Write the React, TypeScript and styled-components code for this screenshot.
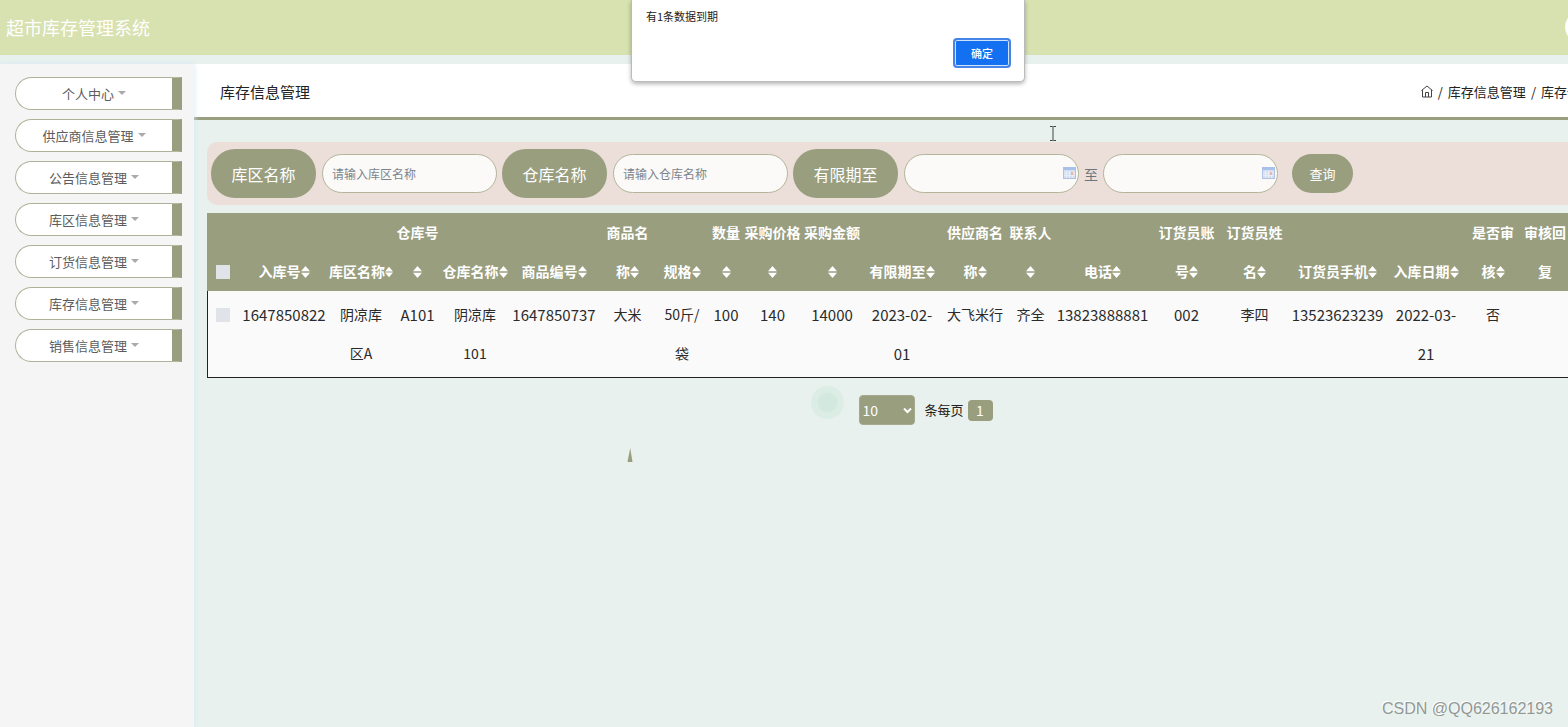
import React from "react";
import styled, { createGlobalStyle } from "styled-components";

const olive = "#999e7f";
const mint = "#e8f1ed";

const GlobalStyle = createGlobalStyle`
  *, *::before, *::after { box-sizing: border-box; }
  html, body, #root { height: 100%; }
  body {
    margin: 0;
    overflow: hidden;
    background: ${mint};
    color: #222;
    font-family: "Noto Sans CJK SC", "Open Sans", sans-serif;
    font-size: 14px;
  }
  button, input, select { font-family: inherit; margin: 0; }
`;

const Viewport = styled.div`
  position: relative;
  min-height: 100%;
  overflow: hidden;
  display: flex;
  flex-direction: column;
`;

const TopBar = styled.header`
  display: flex;
  align-items: center;
  justify-content: space-between;
  min-width: 1645px;
  height: 55px;
  padding: 0 48px 2px 6px;
  background: #d8e1b0;
`;

const Brand = styled.h1`
  margin: 0;
  color: #fff;
  font-size: 18px;
  font-weight: 400;
  line-height: 26px;
`;

const Avatar = styled.span`
  width: 32px;
  height: 32px;
  border-radius: 50%;
  background: #fff;
`;

const Body = styled.div`
  flex: 1;
  display: flex;
  min-width: 1645px;
  padding-top: 9px;
`;

const Sidebar = styled.nav`
  position: relative;
  flex: none;
  display: flex;
  flex-direction: column;
  gap: 9px;
  width: 194px;
  padding: 13px 12px 0 15px;
  background: #f5f5f5;
  box-shadow: 0 0 6px #d3e9f5;
`;

const MenuButton = styled.button`
  display: flex;
  align-items: center;
  justify-content: center;
  gap: 4px;
  height: 33px;
  padding: 0;
  border: 1px solid #aeb298;
  border-right: 10px solid ${olive};
  border-radius: 17px 0 0 17px;
  background: #fff;
  color: #5c5c5c;
  font-size: 13px;
  line-height: 20px;
`;

const Caret = styled.span`
  border: 4px solid transparent;
  border-top-color: #aaa;
  border-bottom-width: 0;
  margin-bottom: 2px;
`;

const Main = styled.main`
  flex: 1;
  min-width: 0;
`;

const PageHead = styled.div`
  display: flex;
  align-items: center;
  justify-content: space-between;
  height: 56px;
  padding: 2px 26px 0;
  border-bottom: 3px solid ${olive};
  background: #fff;
`;

const PageTitle = styled.h2`
  margin: 0;
  color: #222;
  font-size: 15px;
  font-weight: 400;
  line-height: 22px;
`;

const Crumbs = styled.div`
  display: flex;
  align-items: center;
  gap: 5px;
  font-size: 13px;
  line-height: 20px;
  white-space: nowrap;
`;

const CrumbLink = styled.a`
  display: flex;
  color: #222;
  text-decoration: none;
`;

const Content = styled.div`
  padding: 22px 0 0 13px;
`;

const FilterBar = styled.form`
  display: flex;
  align-items: center;
  gap: 5px;
  height: 63px;
  margin-bottom: 8px;
  padding: 0 4px;
  border-radius: 10px;
  background: #ecdfda;
  color: #6c757d;
  font-size: 14px;
`;

const Field = styled.div`
  display: flex;
  align-items: center;
  gap: 6px;
`;

const Pill = styled.label`
  display: flex;
  align-items: center;
  justify-content: center;
  width: 105px;
  height: 49px;
  border-radius: 24px;
  background: ${olive};
  color: #fff;
  font-size: 16px;
`;

const InputWrap = styled.span`
  position: relative;
  display: flex;
`;

const TextInput = styled.input`
  width: 175px;
  height: 39px;
  padding: 0 9px;
  border: 1px solid #b3b59b;
  border-radius: 20px;
  background: #fbfaf8;
  color: #495057;
  font-size: 12px;
  &::placeholder { color: #7c858d; opacity: 1; }
`;

const CalendarSlot = styled.span`
  position: absolute;
  right: 3px;
  top: 13px;
  display: flex;
`;

const QueryButton = styled.button`
  width: 61px;
  height: 39px;
  margin-left: 9px;
  padding: 0;
  border: 0;
  border-radius: 20px;
  background: ${olive};
  color: #fff;
  font-size: 13px;
`;

const Table = styled.table`
  width: 100%;
  table-layout: fixed;
  border-collapse: separate;
  border-spacing: 0;
  line-height: 39px;
  text-align: center;
  white-space: nowrap;
`;

const Col = styled.col<{ $w?: number }>`
  width: ${(p) => (p.$w ? `${p.$w}px` : "auto")};
`;

const Th = styled.th`
  padding: 0;
  background: ${olive};
  color: #fff;
  font-weight: 700;
  vertical-align: bottom;
`;

const Td = styled.td<{ $numeric?: boolean }>`
  padding: 4px 0;
  border-bottom: 1px solid #222;
  background: #fafafa;
  color: #2a2a2a;
  font-size: ${(p) => (p.$numeric ? 15 : 14)}px;
  vertical-align: top;
  &:first-child { box-shadow: inset 1px 0 #222; }
`;

const Line = styled.span`
  display: flex;
  align-items: center;
  justify-content: center;
  height: 39px;
`;

const Tick = styled.input`
  appearance: none;
  width: 14px;
  height: 14px;
  margin: 0;
  background: #e0e4e8;
`;

const Pager = styled.div`
  display: flex;
  align-items: center;
  justify-content: center;
  margin-top: 17px;
  font-size: 13px;
`;

const SelectWrap = styled.span`
  position: relative;
  display: flex;
`;

const SizeSelect = styled.select`
  appearance: none;
  width: 56px;
  height: 30px;
  padding: 0 2px;
  border: 1px solid #a5aa8c;
  border-radius: 4px;
  background: ${olive};
  color: #fff;
  font-size: 14px;
`;

const SelectArrow = styled.svg`
  position: absolute;
  right: 3px;
  top: 12px;
  pointer-events: none;
`;

const PagerLabel = styled.label`
  margin: 0 4px 0 9px;
  line-height: 20px;
`;

const PageButton = styled.button`
  width: 25px;
  height: 21px;
  padding: 0;
  border: 0;
  border-radius: 4px;
  background: ${olive};
  color: #fff;
  font-size: 14px;
  line-height: 20px;
`;

const Dialog = styled.div`
  position: absolute;
  top: 0;
  left: 631px;
  z-index: 5;
  display: flex;
  flex-direction: column;
  justify-content: space-between;
  width: 394px;
  height: 82px;
  padding: 7px 13px 13px 14px;
  border: 1px solid #bbb;
  border-top: 0;
  border-radius: 0 0 5px 5px;
  background: #fff;
  box-shadow: 0 2px 4px rgba(0, 0, 0, 0.3);
`;

const DialogText = styled.p`
  margin: 0;
  color: #222;
  font-size: 11px;
  line-height: 18px;
`;

const ConfirmButton = styled.button`
  align-self: flex-end;
  width: 58px;
  height: 30px;
  padding: 0;
  border: 2px solid #4585e8;
  border-radius: 4px;
  background: #1370f1;
  box-shadow: inset 0 0 0 1px #cfe2fc;
  color: #fff;
  font-size: 11px;
  font-weight: 500;
`;

const Float = styled.svg<{ $x: number; $y: number }>`
  position: absolute;
  left: ${(p) => p.$x}px;
  top: ${(p) => p.$y}px;
  pointer-events: none;
`;

const Watermark = styled.div`
  position: absolute;
  right: 15px;
  bottom: 8px;
  color: #929895;
  font-family: "Liberation Sans", sans-serif;
  font-size: 16px;
  line-height: 20px;
  text-shadow: -1px -1px 0 #fff;
`;

const menu = ["个人中心", "供应商信息管理", "公告信息管理", "库区信息管理", "订货信息管理", "库存信息管理", "销售信息管理"];

type Column = { width: number; head: string[]; cell: string[]; plain?: boolean };

const columns: Column[] = [
  { width: 90, head: ["入库号"], cell: ["1647850822"] },
  { width: 64, head: ["库区名称"], cell: ["阴凉库", "区A"] },
  { width: 49, head: ["仓库号", ""], cell: ["A101"] },
  { width: 66, head: ["仓库名称"], cell: ["阴凉库", "101"] },
  { width: 92, head: ["商品编号"], cell: ["1647850737"] },
  { width: 55, head: ["商品名", "称"], cell: ["大米"] },
  { width: 54, head: ["规格"], cell: ["50斤/", "袋"] },
  { width: 34, head: ["数量", ""], cell: ["100"] },
  { width: 59, head: ["采购价格", ""], cell: ["140"] },
  { width: 60, head: ["采购金额", ""], cell: ["14000"] },
  { width: 80, head: ["有限期至"], cell: ["2023-02-", "01"] },
  { width: 66, head: ["供应商名", "称"], cell: ["大飞米行"] },
  { width: 45, head: ["联系人", ""], cell: ["齐全"] },
  { width: 99, head: ["电话"], cell: ["13823888881"] },
  { width: 69, head: ["订货员账", "号"], cell: ["002"] },
  { width: 67, head: ["订货员姓", "名"], cell: ["李四"] },
  { width: 99, head: ["订货员手机"], cell: ["13523623239"] },
  { width: 78, head: ["入库日期"], cell: ["2022-03-", "21"] },
  { width: 56, head: ["是否审", "核"], cell: ["否"] },
  { width: 48, head: ["审核回", "复"], cell: [], plain: true },
];

const SortIcon = () => (
  <svg width="9" height="12" viewBox="0 0 9 12" fill="#fff" aria-hidden="true">
    <path d="M4.500 0 9 5.300H0Z M0 6.700h9L4.500 12Z" />
  </svg>
);

const CalendarIcon = () => (
  <svg width="13" height="12" viewBox="0 0 13 12" aria-hidden="true">
    <rect x="0.500" y="0.500" width="12" height="11" fill="#d5dff2" stroke="#b0c1e2" />
    <rect x="0" y="0" width="13" height="3" fill="#a9c0ea" />
    <path d="M3.500 4v7M6.500 4v7M9.500 4v7M1 6h11M1 8.500h11" stroke="#eef3fb" strokeWidth="0.700" />
    <rect x="8" y="5" width="2" height="3" fill="#edb5a6" />
  </svg>
);

const HomeIcon = () => (
  <svg width="12" height="13" viewBox="0 0 12 13" fill="none" stroke="#444" aria-hidden="true">
    <path d="M0.500 5.500 6 1l5.500 4.500M1.500 5v7h9V5M4.500 12V7.500h3V12" />
  </svg>
);

const isNumeric = (lines: string[]) => lines.length > 0 && lines.every((l) => /^[A-Z0-9-]+$/.test(l));

export default function App() {
  return (
    <>
      <GlobalStyle />
      <Viewport>
        <TopBar>
          <Brand>超市库存管理系统</Brand>
          <Avatar />
        </TopBar>
        <Body>
          <Sidebar>
            {menu.map((m) => (
              <MenuButton key={m} type="button">
                {m}
                <Caret />
              </MenuButton>
            ))}
          </Sidebar>
          <Main>
            <PageHead>
              <PageTitle>库存信息管理</PageTitle>
              <Crumbs>
                <CrumbLink href="#" aria-label="首页"><HomeIcon /></CrumbLink>
                <span>/</span>
                <CrumbLink href="#">库存信息管理</CrumbLink>
                <span>/</span>
                <span>库存信息管理</span>
              </Crumbs>
            </PageHead>
            <Content>
              <FilterBar onSubmit={(e) => e.preventDefault()}>
                <Field>
                  <Pill htmlFor="area">库区名称</Pill>
                  <TextInput id="area" placeholder="请输入库区名称" />
                </Field>
                <Field>
                  <Pill htmlFor="store">仓库名称</Pill>
                  <TextInput id="store" placeholder="请输入仓库名称" />
                </Field>
                <Field>
                  <Pill htmlFor="from">有限期至</Pill>
                  <InputWrap>
                    <TextInput id="from" />
                    <CalendarSlot><CalendarIcon /></CalendarSlot>
                  </InputWrap>
                </Field>
                <label htmlFor="to">至</label>
                <InputWrap>
                  <TextInput id="to" />
                  <CalendarSlot><CalendarIcon /></CalendarSlot>
                </InputWrap>
                <QueryButton type="submit">查询</QueryButton>
              </FilterBar>
              <Table>
                <colgroup>
                  <Col $w={32} />
                  {columns.map((c, i) => <Col key={i} $w={c.width} />)}
                  <Col />
                </colgroup>
                <thead>
                  <tr>
                    <Th><Line><Tick type="checkbox" aria-label="全选" /></Line></Th>
                    {columns.map((c, i) => (
                      <Th key={i}>
                        {c.head.map((line, n) => (
                          <Line key={n}>
                            {line}
                            {n === c.head.length - 1 && !c.plain && <SortIcon />}
                          </Line>
                        ))}
                      </Th>
                    ))}
                    <Th />
                  </tr>
                </thead>
                <tbody>
                  <tr>
                    <Td><Line><Tick type="checkbox" aria-label="选择" /></Line></Td>
                    {columns.map((c, i) => (
                      <Td key={i} $numeric={isNumeric(c.cell)}>
                        {c.cell.map((line, n) => <Line key={n}>{line}</Line>)}
                      </Td>
                    ))}
                    <Td />
                  </tr>
                </tbody>
              </Table>
              <Pager>
                <SelectWrap>
                  <SizeSelect id="size" defaultValue="10">
                    <option>10</option>
                    <option>25</option>
                    <option>50</option>
                  </SizeSelect>
                  <SelectArrow width="9" height="7" viewBox="0 0 9 7" fill="none" stroke="#fff" strokeWidth="2">
                    <path d="M1 1.500 4.500 5 8 1.500" />
                  </SelectArrow>
                </SelectWrap>
                <PagerLabel htmlFor="size">条每页</PagerLabel>
                <PageButton type="button">1</PageButton>
              </Pager>
            </Content>
          </Main>
        </Body>

        <Dialog role="alertdialog" aria-labelledby="notice">
          <DialogText id="notice">有1条数据到期</DialogText>
          <ConfirmButton type="button">确定</ConfirmButton>
        </Dialog>
        <Float $x={1049} $y={126} width="8" height="15" viewBox="0 0 8 15" fill="none" stroke="#444">
          <path d="M1 0.500h2.500l0.500 0.500 0.500-0.500H7M4 1v13M1 14.500h2.500l0.500-0.500 0.500 0.500H7" />
        </Float>
        <Float $x={811} $y={386} width="33" height="33" viewBox="0 0 33 33">
          <circle cx="16.500" cy="16.500" r="16.500" fill="#dcede5" />
          <circle cx="16.500" cy="16.500" r="10" fill="#d3e9df" />
        </Float>
        <Float $x={627} $y={448} width="6" height="14" viewBox="0 0 6 14">
          <path d="M3.200 0 5.500 14H0.500Z" fill={olive} />
        </Float>
        <Watermark>CSDN @QQ626162193</Watermark>
      </Viewport>
    </>
  );
}
